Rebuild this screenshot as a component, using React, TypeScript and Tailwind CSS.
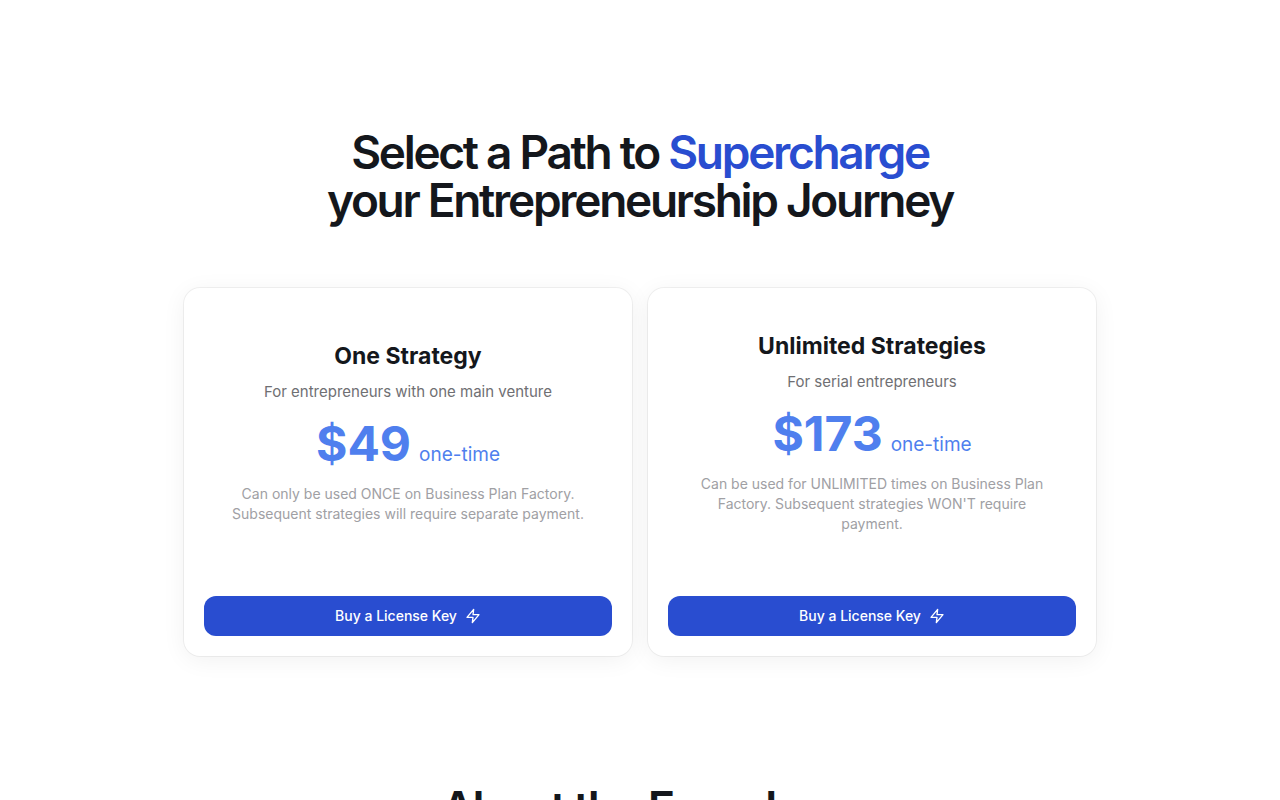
interface Plan {
  name: string
  audience: string
  price: string
  note: string
}

const plans: Plan[] = [
  {
    name: 'One Strategy',
    audience: 'For entrepreneurs with one main venture',
    price: '$49',
    note: 'Can only be used ONCE on Business Plan Factory. Subsequent strategies will require separate payment.',
  },
  {
    name: 'Unlimited Strategies',
    audience: 'For serial entrepreneurs',
    price: '$173',
    note: "Can be used for UNLIMITED times on Business Plan Factory. Subsequent strategies WON'T require payment.",
  },
]

const BoltIcon = () => (
  <svg className="size-4" viewBox="0 0 24 24" fill="none" stroke="currentColor" strokeWidth={2} aria-hidden="true">
    <path strokeLinecap="round" strokeLinejoin="round" d="M13 2 3 14h9l-1 8 10-12h-9l1-8z" />
  </svg>
)

const PlanCard = ({ plan }: { plan: Plan }) => (
  <article className="flex flex-col rounded-2xl bg-white p-5 shadow-[0_4px_24px_rgba(0,0,0,0.06)] ring-1 ring-black/5">
    {/* Plan details */}
    <div className="flex min-h-[248px] grow flex-col items-center justify-center px-5 text-center">
      <h3 className="text-[23px] leading-8 font-bold text-[#14171c]">{plan.name}</h3>
      <p className="mt-2 text-[15px] leading-6 text-[#6f6f73]">{plan.audience}</p>
      <p className="mt-4 flex items-baseline gap-2 text-[#4f7fee]">
        <span className="text-5xl font-bold">{plan.price}</span>
        <span className="text-[19px] leading-5">one-time</span>
      </p>
      <p className="mt-4 text-sm text-[#a0a0a4]">{plan.note}</p>
    </div>

    <button
      type="button"
      className="mt-10 flex h-10 w-full items-center justify-center gap-2 rounded-xl bg-[#294dd0] text-sm font-medium text-white"
    >
      Buy a License Key
      <BoltIcon />
    </button>
  </article>
)

const App = () => (
  <main className="min-h-screen bg-white px-4 pt-32 font-[Inter,sans-serif]">
    <section>
      <h2 className="text-center text-[46px] leading-12 font-semibold tracking-tighter text-[#14171c]">
        Select a Path to <span className="text-[#294dd0]">Supercharge</span>
        <br />
        your Entrepreneurship Journey
      </h2>

      <div className="mx-auto mt-16 grid max-w-[912px] gap-4 md:grid-cols-2">
        {plans.map((plan) => (
          <PlanCard key={plan.name} plan={plan} />
        ))}
      </div>
    </section>

    <section className="mt-32">
      <h2 className="text-center text-[46px] leading-12 font-semibold tracking-tighter text-[#14171c]">
        About the Founders
      </h2>
    </section>
  </main>
)

export default App
